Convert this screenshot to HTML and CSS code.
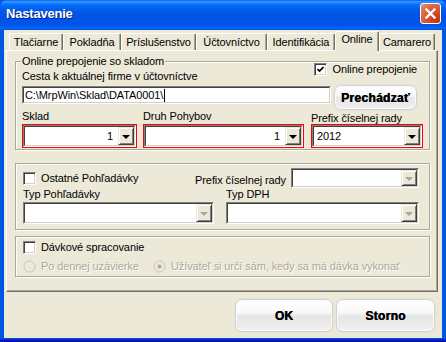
FILE: index.html
```html
<!DOCTYPE html>
<html lang="sk">
<head>
    <meta charset="UTF-8" />
    <title>Nastavenie</title>
    <link rel="stylesheet" href="styles.css">
</head>
<body>
<div class="window">
    <div class="titlebar">
        <span class="title">Nastavenie</span>
        <span class="close-btn">
            <svg width="19" height="19" viewBox="0 0 19 19"><path d="M5.5 5.5 L13.5 13.5 M13.5 5.5 L5.5 13.5" stroke="#fff" stroke-width="2.4" stroke-linecap="square"/></svg>
        </span>
    </div>
    <div class="client">
        <div class="tabs">
            <div class="tab t-tlac">Tlačiarne</div>
            <div class="tab t-pokl">Pokladňa</div>
            <div class="tab t-pris">Príslušenstvo</div>
            <div class="tab t-uct">Účtovníctvo</div>
            <div class="tab t-iden">Identifikácia</div>
            <div class="tab t-onl active">Online</div>
            <div class="tab t-cam">Camarero</div>
        </div>
        <div class="page">
            <!-- online prepojenie -->
            <div class="group g1">
                <span class="caption">Online prepojenie so skladom</span>
                <div class="row-a">
                    <span>Cesta k aktuálnej firme v účtovníctve</span>
                    <label class="check online">
                        <span class="cb"><svg width="7" height="7" viewBox="0 0 7 7"><polyline points="0.5,3 2.5,5 6.5,1" fill="none" stroke="#000" stroke-width="1.7"/></svg></span>
                        Online prepojenie
                    </label>
                </div>
                <div class="row-b">
                    <div class="edit path"><div class="edit-in">C:\MrpWin\Sklad\DATA0001\<span class="caret"></span></div></div>
                    <button class="gbtn browse">Prechádzať</button>
                </div>
                <div class="fields">
                    <div class="field">
                        <span class="lbl">Sklad</span>
                        <div class="req">
                            <div class="combo"><div class="combo-in">
                                <span class="val num">1</span>
                                <span class="drop"><i class="arrow"></i></span>
                            </div></div>
                        </div>
                    </div>
                    <div class="field">
                        <span class="lbl">Druh Pohybov</span>
                        <div class="req">
                            <div class="combo"><div class="combo-in">
                                <span class="val num">1</span>
                                <span class="drop"><i class="arrow"></i></span>
                            </div></div>
                        </div>
                    </div>
                    <div class="field f-prefix">
                        <span class="lbl">Prefix číselnej rady</span>
                        <div class="req">
                            <div class="combo"><div class="combo-in">
                                <span class="val">2012</span>
                                <span class="drop"><i class="arrow"></i></span>
                            </div></div>
                        </div>
                    </div>
                </div>
            </div>

            <!-- pohladavky -->
            <div class="group g2">
                <div class="row-1">
                    <label class="check">
                        <span class="cb"></span>
                        Ostatné Pohľadávky
                    </label>
                    <span class="prefix-lbl">Prefix číselnej rady</span>
                    <div class="combo small prefix-combo"><div class="combo-in">
                        <span class="val"></span>
                        <span class="drop"><i class="arrow off"></i></span>
                    </div></div>
                </div>
                <div class="grid-2">
                    <span class="lbl">Typ Pohľadávky</span>
                    <span class="lbl">Typ DPH</span>
                    <div class="combo"><div class="combo-in">
                        <span class="val"></span>
                        <span class="drop"><i class="arrow off"></i></span>
                    </div></div>
                    <div class="combo"><div class="combo-in">
                        <span class="val"></span>
                        <span class="drop"><i class="arrow off"></i></span>
                    </div></div>
                </div>
            </div>

            <!-- davkove spracovanie -->
            <div class="group g3">
                <label class="check">
                    <span class="cb"></span>
                    Dávkové spracovanie
                </label>
                <div class="radios">
                    <label class="radio first">
                        <svg width="13" height="13" viewBox="0 0 13 13"><circle cx="6.5" cy="6.5" r="5.5" fill="#ece9d8" stroke="#c9c6b8"/></svg>
                        Po dennej uzávierke
                    </label>
                    <label class="radio">
                        <svg width="13" height="13" viewBox="0 0 13 13"><circle cx="6.5" cy="6.5" r="5.5" fill="#ece9d8" stroke="#c9c6b8"/><circle cx="6.5" cy="6.5" r="2" fill="#aca899"/></svg>
                        Užívateľ si určí sám, kedy sa má dávka vykonať
                    </label>
                </div>
            </div>
        </div>
        <div class="actions">
            <button class="gbtn ok">OK</button>
            <button class="gbtn storno">Storno</button>
        </div>
    </div>
</div>
</body>
</html>
```

FILE: styles.css
```css
* {
    box-sizing: border-box;
}
html, body {
    margin: 0;
    padding: 0;
}
body {
    width: 446px;
    height: 342px;
    overflow: hidden;
    font-family: 'Liberation Sans', Arial, sans-serif;
    font-size: 11px;
    letter-spacing: -0.1px;
    color: #000;
    background: #0055e5;
}
.window {
    width: 446px;
    height: 342px;
    display: flex;
    flex-direction: column;
    background: linear-gradient(to top, #00138c 0, #0019cf 2px, #0842d6 3px, #0055e5 4px, #0055e5 100%);
}
.titlebar {
    height: 30px;
    flex: none;
    display: flex;
    align-items: center;
    justify-content: space-between;
    padding: 0 5px 4px 6px;
    background: linear-gradient(to bottom, #0058ee 0%, #3593ff 4%, #288eff 8%, #127dff 12%, #036ffc 16%, #0262ee 28%, #0057e5 42%, #0054e3 58%, #0055eb 86%, #005bf5 90%, #026afe 94%, #0062ef 96%, #0052d6 100%);
    border-radius: 7px 7px 0 0;
}
.title {
    color: #fff;
    font-size: 13px;
    font-weight: bold;
    letter-spacing: -0.2px;
    text-shadow: 1px 1px 0 #0a1883;
}
.close-btn {
    width: 21px;
    height: 21px;
    display: flex;
    align-items: center;
    justify-content: center;
    border: 1px solid #fff;
    border-radius: 3px;
    background: radial-gradient(circle at 85% 85%, #c2350f 0%, #d9512a 45%, #e0704e 75%, #e99a80 100%);
}
.client {
    flex: 1;
    margin: 0 4px 4px 4px;
    padding: 1px 4px 0 2px;
    background: #ece9d8;
    display: flex;
    flex-direction: column;
}

/* tabs */
.tabs {
    display: flex;
    align-items: flex-end;
    height: 19px;
    padding-left: 3px;
}
.tab {
    height: 17px;
    padding-top: 2px;
    line-height: 13px;
    text-align: center;
    background: #ece9d8;
    border-top: 1px solid #fff;
    border-left: 1px solid #fff;
    border-right: 1px solid #716f64;
    border-radius: 2px 2px 0 0;
    box-shadow: inset -1px 0 0 #aca899;
    white-space: nowrap;
}
.tab.active {
    height: 20px;
    margin-bottom: -1px;
    padding-top: 1px;
    position: relative;
    z-index: 1;
}
.t-tlac { width: 54px; }
.t-pokl { width: 58px; }
.t-pris { width: 75px; }
.t-uct { width: 71px; }
.t-iden { width: 68px; }
.t-onl { width: 44px; }
.t-cam { width: 56px; }

.page {
    width: 432px;
    height: 242px;
    flex: none;
    padding: 10px 0 0 8px;
    border-top: 1px solid #fff;
    border-left: 1px solid #fff;
    border-right: 1px solid #716f64;
    border-bottom: 1px solid #716f64;
    box-shadow: inset -1px -1px 0 #aca899;
}

/* group boxes */
.group {
    width: 415px;
    border: 1px solid #aca899;
    box-shadow: inset 1px 1px 0 #fff, 1px 1px 0 #fff;
}
.caption {
    display: block;
    width: fit-content;
    margin: -7px 0 0 -1px;
    padding: 0 1px;
    line-height: 13px;
    background: #ece9d8;
}
.g1 {
    padding: 0 12px 1px 6px;
}
.row-a {
    display: flex;
    justify-content: space-between;
    align-items: flex-start;
    height: 13px;
    margin-top: 2px;
    line-height: 13px;
}
.check {
    display: flex;
    align-items: center;
    gap: 5px;
    line-height: 13px;
    white-space: nowrap;
}
.check.online {
    margin-top: -7px;
}
.cb {
    width: 13px;
    height: 13px;
    flex: none;
    display: flex;
    align-items: center;
    justify-content: center;
    background: #fff;
    border: 1px solid;
    border-color: #808080 #fff #fff #808080;
    box-shadow: inset 1px 1px 0 #404040, inset -1px -1px 0 #d4d0c8;
}
.row-b {
    display: flex;
    align-items: flex-start;
    margin-top: 2px;
}
.edit, .combo {
    background: #fff;
    border: 1px solid;
    border-color: #808080 #fff #fff #808080;
}
.edit-in, .combo-in {
    height: 100%;
    border: 1px solid;
    border-color: #404040 #d4d0c8 #d4d0c8 #404040;
    display: flex;
    align-items: center;
}
.path {
    width: 312px;
    height: 18px;
    margin-top: 1px;
}
.path .edit-in {
    padding-left: 1px;
    line-height: 14px;
}
.caret {
    display: inline-block;
    width: 1px;
    height: 13px;
    background: #000;
    margin-left: 1px;
}
.gbtn {
    font-family: 'Liberation Sans', Arial, sans-serif;
    font-size: 12px;
    font-weight: bold;
    letter-spacing: 0.3px;
    color: #000;
    text-shadow: 0.5px 0 0 #000;
    border: 1px solid #d2d2d2;
    border-radius: 7px;
    background: linear-gradient(to bottom, #ffffff 0%, #f8f8f8 40%, #e6e6e6 52%, #ebebeb 80%, #f3f3f3 100%);
    box-shadow: inset 0 0 0 1px #fbfbfb, 0 0 0 1px #e6e4da;
    padding: 0;
    cursor: pointer;
}
.browse {
    width: 84px;
    height: 25px;
    margin-left: 3px;
}
.fields {
    display: grid;
    grid-template-columns: 115px 161px 113px;
    column-gap: 6px;
}
.fields .field:last-child {
    margin-left: 1px;
}
.field {
    display: flex;
    flex-direction: column;
}
.lbl {
    line-height: 13px;
}
.f-prefix .lbl {
    margin-top: 2px;
    margin-bottom: -2px;
}
.req {
    margin-top: 1px;
    border: 1px solid #ff0000;
}
.combo {
    height: 22px;
}
.val {
    flex: 1;
    padding: 0 3px;
    line-height: 14px;
}
.val.num {
    text-align: right;
    padding-right: 5px;
}
.drop {
    width: 16px;
    height: 100%;
    flex: none;
    display: flex;
    align-items: center;
    justify-content: center;
    background: #ece9d8;
    border: 1px solid;
    border-color: #ece9d8 #404040 #404040 #ece9d8;
    box-shadow: inset 1px 1px 0 #fff, inset -1px -1px 0 #808080;
}
.arrow {
    width: 0;
    height: 0;
    border-left: 4px solid transparent;
    border-right: 4px solid transparent;
    border-top: 4px solid #000;
    margin-top: 1px;
}
.arrow.off {
    border-top-color: #aca899;
}

.g2 {
    margin-top: 13px;
    padding: 4px 10px 5px 7px;
}
.row-1 {
    display: flex;
    align-items: center;
    height: 20px;
}
.row-1 .prefix-lbl {
    margin-left: auto;
    margin-right: 5px;
    padding-top: 4px;
    line-height: 13px;
}
.combo.small {
    height: 20px;
}
.prefix-combo {
    width: 128px;
}
.grid-2 {
    display: grid;
    grid-template-columns: 191px 193px;
    column-gap: 12px;
    row-gap: 1px;
}

.g3 {
    margin-top: 6px;
    padding: 4px 0 3px 7px;
}
.radios {
    display: flex;
    margin-top: 6px;
}
.radio {
    display: flex;
    align-items: center;
    gap: 5px;
    line-height: 13px;
    color: #aca899;
    text-shadow: 1px 1px 0 #fff;
}
.radio.first {
    width: 130px;
}

.actions {
    display: flex;
    justify-content: flex-end;
    gap: 3px;
    margin-top: 7px;
    padding-right: 3px;
}
.ok {
    width: 98px;
    height: 33px;
}
.storno {
    width: 99px;
    height: 33px;
}
```
